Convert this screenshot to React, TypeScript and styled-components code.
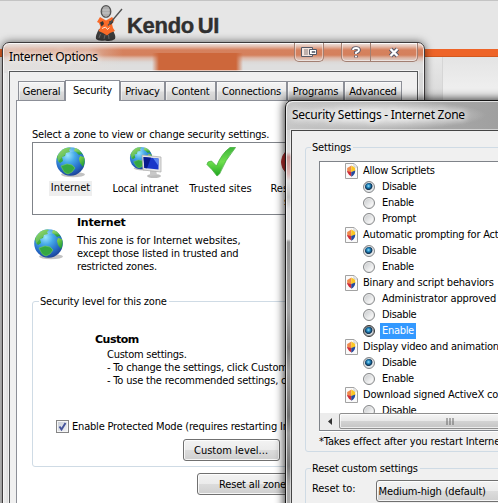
import React from "react";
import styled, { createGlobalStyle, css } from "styled-components";

const Global = createGlobalStyle`
  * { box-sizing: border-box; }
  html, body { margin: 0; padding: 0; overflow: hidden; }
  body { font: 11px/13px "DejaVu Sans Condensed", "DejaVu Sans", Tahoma, sans-serif; font-stretch: condensed; color: #000; }
`;

const Desktop = styled.div`
  position: relative;
  width: 498px;
  height: 503px;
  overflow: hidden;
  background: #e4e4e4;
`;
const SiteHeader = styled.header`
  height: 49px;
  display: flex;
  padding: 4px 0 0 95px;
  border-top: 1px solid #c4c4c4;
  background: #e6e6e6;
`;
const SiteName = styled.div`
  margin: 8px 0 0 4px;
  font: bold 22px/25px "Liberation Sans", Arial, sans-serif;
  letter-spacing: -0.3px;
  word-spacing: -2px;
  color: #303030;
  -webkit-text-stroke: 0.4px #303030;
  white-space: nowrap;
`;
const SiteBar = styled.div`
  height: 8px;
  background: #ee6428;
  border-bottom: 1px solid #d2581f;
`;
const SiteBody = styled.div`
  height: 446px;
  display: flex;
  justify-content: flex-end;
  background: linear-gradient(#e7e7e7, #dadada 42px);
`;
const SiteAside = styled.div`
  width: 56px;
  border-left: 1px solid #d6d6d6;
  background: linear-gradient(#e4e4e4, #eeeeee 30px);
`;

const frame = css`
  position: absolute;
  display: flex;
  flex-direction: column;
  border: 1px solid #3d3a3b;
  border-radius: 7px 7px 0 0;
`;
const OptionsWindow = styled.section`
  ${frame}
  left: 2px;
  top: 42px;
  width: 423px;
  height: 475px;
  padding: 0 6px;
  background:
    linear-gradient(90deg, #d0693e00 0 149px, #cd673b 156px 233px, #d0693e00 240px) 0 10px / 100% 18px no-repeat,
    linear-gradient(90deg, #e5e1df99 0, #e5dfdb77 70px 85px, #e0dcda00 120px) 0 0 / 100% 28px no-repeat,
    linear-gradient(#efe6e3 0, #e6c4b6 3px, #d6815e 7px, #d4805c 12px, #ddb6a6 15px, #dcd8d6 19px, #dedede 22px) 0 0 / 100% 30px no-repeat,
    linear-gradient(90deg, #d8d8d8, #ececec 2px, #d6d6d6 6px, #d9d9d9);
  box-shadow: inset 0 0 0 1px #ffffffc0, 0 0 9px #0009;
`;
const SettingsWindow = styled.section`
  ${frame}
  left: 285px;
  top: 100px;
  width: 240px;
  height: 425px;
  padding: 0 5px;
  border-color: #171717;
  background:
    radial-gradient(ellipse 110px 15px at 90px 14px, #e0e0e0 35%, #cfcfcf88 75%, #bbb0) 0 0 / 100% 29px no-repeat,
    linear-gradient(90deg, #c7c7c7, #a8a8a8 150px, #9c9c9c) 0 0 / 100% 29px no-repeat,
    linear-gradient(#d2d2d2 0 29px, #dadada 51px, #c7908f 56px, #d9b6b4 73px, #ddd 80px, #bbb 96px, #dedede 108px 138px, #939393 141px, #a4a4a4 210px, #777 246px, #9c9c9c 270px, #6f6f6f 315px, #9b9b9b 332px, #777 365px, #aaa 385px);
  box-shadow: inset 1px 1px 0 #ffffffb0, 0 0 10px 1px #000c;
`;
const TitleBar = styled.div`
  display: flex;
  justify-content: space-between;
  height: 28px;
  flex: none;
`;
const Title = styled.h1<{ $ls?: number; $ml?: number }>`
  margin: 0 0 0 ${p => p.$ml ?? 0}px;
  font: 12px/28px "Noto Sans", sans-serif;
  letter-spacing: ${p => p.$ls ?? 0}px;
  text-shadow: 0 0 6px #fff, 0 0 9px #fff;
  white-space: nowrap;
`;
const Caption = styled.div`
  display: flex;
  gap: 17px;
`;
const CaptionGroup = styled.div`
  display: flex;
  height: 19px;
  border: 1px solid #a17f72;
  border-top: 0;
  border-radius: 0 0 5px 5px;
  box-shadow: inset 0 0 0 1px #ffffff70;
`;
const CaptionButton = styled.div<{ $w: number }>`
  width: ${p => p.$w}px;
  display: flex;
  align-items: center;
  justify-content: center;
  & + & { border-left: 1px solid #a17f72; }
`;
const OptionsClient = styled.div`
  flex: 1;
  padding: 8px 0 0 6px;
  border: 1px solid #56585a;
  border-bottom: 0;
  background: #f0f0f0;
  box-shadow: 0 0 0 1px #ffffffa0;
`;
const Tabs = styled.nav`
  display: flex;
  align-items: flex-end;
  height: 20px;
  padding-left: 2px;
`;
const Tab = styled.div<{ $w: number; $on?: boolean }>`
  width: ${p => p.$w}px;
  height: ${p => (p.$on ? 21 : 19)}px;
  margin-bottom: ${p => (p.$on ? -1 : 0)}px;
  padding-top: ${p => (p.$on ? 3 : 3)}px;
  text-align: center;
  white-space: nowrap;
  letter-spacing: -0.2px;
  border: 1px solid #8c8f97;
  border-bottom: 0;
  background: ${p => (p.$on ? "#fff" : "linear-gradient(#f4f4f4, #ebebeb 9px, #dcdcdc 10px, #cfcfcf)")};
  box-shadow: ${p => (p.$on ? "none" : "inset 1px 1px 0 #fff8")};
  z-index: ${p => (p.$on ? 1 : 0)};
`;
const Pane = styled.div`
  width: 393px;
  height: 420px;
  padding: 27px 0 0 15px;
  border: 1px solid #8c8f97;
  background: #fff;
`;
const Line = styled.div<{ $ls?: number; $ml?: number; $mt?: number; $bold?: boolean }>`
  height: 13px;
  margin: ${p => p.$mt ?? 0}px 0 0 ${p => p.$ml ?? 0}px;
  letter-spacing: ${p => p.$ls ?? -0.19}px;
  white-space: nowrap;
  ${p => p.$bold && css`font-family: "DejaVu Sans", sans-serif; font-stretch: normal; font-weight: bold;`}
`;
const ZoneList = styled.div`
  display: flex;
  width: 360px;
  height: 73px;
  margin-top: 1px;
  padding: 3px 0 0 0;
  border: 1px solid #7f8389;
`;
const Zone = styled.div`
  width: 75px;
  flex: none;
  display: flex;
  flex-direction: column;
  align-items: center;
`;
const ZoneLabel = styled.span<{ $on?: boolean; $ls?: number }>`
  margin-top: 3px;
  padding: 0 2px;
  min-height: 15px;
  text-align: center;
  letter-spacing: ${p => p.$ls ?? 0}px;
  background: ${p => (p.$on ? "#eee" : "transparent")};
`;
const ZoneInfo = styled.div`
  display: flex;
  gap: 12px;
  height: 72px;
  padding: 1px 0 0 1px;
`;
const ZoneIcon = styled.div`
  padding-top: 12px;
  height: 50px;
`;
const Group = styled.fieldset<{ $h: number; $w: number; $pad: string }>`
  width: ${p => p.$w}px;
  height: ${p => p.$h}px;
  margin: 0;
  padding: ${p => p.$pad};
  min-width: 0;
  border: 1px solid #cfdbe5;
  border-radius: 3px;
`;
const Legend = styled.legend<{ $ml?: number }>`
  margin-left: ${p => p.$ml ?? 0}px;
  padding: 0 2px 0 1px;
  height: 13px;
  letter-spacing: -0.19px;
  white-space: nowrap;
`;
const CheckRow = styled.div`
  display: flex;
  gap: 3px;
  margin: 33px 0 0 16px;
`;
const CheckBox = styled.span`
  display: flex;
  width: 13px;
  height: 13px;
  flex: none;
  border: 1px solid #858585;
  background: linear-gradient(135deg, #c5cbd5, #f4f5f7);
  box-shadow: inset 0 0 0 1px #f6f6f6;
`;
const Button = styled.button<{ $w: number; $ls?: number; $pl: number; $m: string }>`
  display: block;
  width: ${p => p.$w}px;
  height: 22px;
  margin: ${p => p.$m};
  padding: 0 0 0 ${p => p.$pl}px;
  text-align: left;
  font: inherit;
  white-space: nowrap;
  letter-spacing: ${p => p.$ls ?? 0}px;
  color: #000;
  border: 1px solid #707070;
  border-radius: 3px;
  background: linear-gradient(#f3f3f3, #ebebeb 50%, #dcdcdc 51%, #cfcfcf);
  box-shadow: inset 0 0 0 1px #fffc;
`;

const SettingsClient = styled.div`
  flex: 1;
  margin-top: 1px;
  padding: 10px 0 0 13px;
  border: 1px solid #454545;
  background: #f0f0f0;
  box-shadow: 0 0 0 1px #ffffff80;
`;
const Tree = styled.div`
  width: 250px;
  height: 270px;
  border: 1px solid #7f8389;
  box-shadow: 0 1px 0 #fff;
  background: #fff;
`;
const TreeRows = styled.div`
  height: 251px;
  padding-top: 1px;
  overflow: hidden;
`;
const TreeRow = styled.div<{ $head?: boolean }>`
  display: flex;
  align-items: center;
  height: 16px;
  gap: ${p => (p.$head ? 3 : 5)}px;
  padding-left: ${p => (p.$head ? 25 : 43)}px;
  white-space: nowrap;
  & > svg { flex: none; }
`;
const RowLabel = styled.span<{ $sel?: boolean; $ls?: number }>`
  height: 16px;
  padding: 1px 2px 0 2px;
  letter-spacing: ${p => p.$ls ?? -0.2}px;
  color: ${p => (p.$sel ? "#fff" : "#000")};
  background: ${p => (p.$sel ? "#3399ff" : "transparent")};
`;
const Radio = styled.span<{ $on?: boolean; $focus?: boolean }>`
  width: 12px;
  height: 12px;
  flex: none;
  border-radius: 50%;
  border: 1px solid ${p => (p.$focus ? "#333" : "#858789")};
  box-shadow: inset 0 0 0 1px ${p => (p.$focus ? "#9a9a9a" : "#e9e9e9")};
  background: ${p =>
    p.$on
      ? "radial-gradient(circle at 4.5px 4px, #9be0f8 0, #2b92c8 1.5px, #0b3d66 3.2px, #1b3752 3.6px, #dfe6ea 4.4px)"
      : "linear-gradient(135deg, #c3c6c9, #f6f6f6 75%)"};
`;
const ScrollBar = styled.div`
  display: flex;
  height: 17px;
  padding: 0 0 1px 1px;
  background: #ececec;
`;
const ScrollArrow = styled.div`
  width: 18px;
  display: flex;
  align-items: center;
  justify-content: center;
`;
const ScrollThumb = styled.div`
  width: 222px;
  display: flex;
  align-items: center;
  justify-content: center;
  border: 1px solid #8f8f8f;
  border-radius: 2px;
  background: linear-gradient(#f5f5f5, #e8e8e8 50%, #d3d3d3 51%, #c4c4c4);
  box-shadow: inset 0 0 0 1px #fffa;
`;
const ResetRow = styled.div`
  display: flex;
  gap: 20px;
`;

const Globe = ({ size = 32 }: { size?: number }) => (
  <svg width={size} height={size} viewBox="0 0 32 32">
    <defs>
      <radialGradient id="sea" cx="0.4" cy="0.28" r="0.75">
        <stop offset="0" stopColor="#9be6fc" />
        <stop offset="0.35" stopColor="#45a8e8" />
        <stop offset="0.75" stopColor="#2467c4" />
        <stop offset="1" stopColor="#1b3f92" />
      </radialGradient>
      <linearGradient id="land" x1="0" y1="0" x2="0.6" y2="1">
        <stop offset="0" stopColor="#93dc4a" />
        <stop offset="1" stopColor="#1f9c3a" />
      </linearGradient>
    </defs>
    <ellipse cx="18" cy="28.6" rx="12" ry="2.6" fill="#9a9a9a" opacity="0.6" />
    <circle cx="15.5" cy="15.5" r="14.3" fill="url(#sea)" />
    <path d="M2 11Q5 4 11 2Q15 1 16 2L14 4L15 6L11 7L10 10L7 11L8 15L5 17L3 15Z" fill="url(#land)" />
    <path d="M20 2Q25 3 28 9L26 8L24 9L21 6L19 5Z" fill="url(#land)" />
    <path d="M25 10L29 11Q30.5 16 28 21L25 17L24 13Z" fill="url(#land)" />
    <path d="M6 20L12 18L17 19L20 22L17 26L13 28Q9 27 8 24Z" fill="#35a843" stroke="#79cf55" strokeWidth="0.6" />
    <path d="M3 8Q8 1 16 1Q24 2 27 7Q20 4 13 7Q7 10 3 16Z" fill="#fff" opacity="0.16" />
  </svg>
);
const Intranet = () => (
  <svg width="34" height="33" viewBox="0 0 34 33">
    <svg x="0" y="0" width="25" height="25" viewBox="0 0 32 32"><Globe /></svg>
    <ellipse cx="25" cy="30" rx="7" ry="2" fill="#bdbdbd" />
    <path d="M21 24h6l1 5-7 1z" fill="#c8c8c8" />
    <path d="M13 9L32 11V26L14 24Z" fill="#e5e5e5" stroke="#a8a8a8" strokeWidth="0.7" />
    <path d="M14.5 11L29.5 12.5V23.5L15.3 22Z" fill="#1a37c9" />
    <path d="M14.5 11L22 11.8L18 22.2L15.3 22Z" fill="#081b8d" />
    <path d="M24 12L29.5 12.5V20Z" fill="#5a84f0" />
  </svg>
);
const Check = () => (
  <svg width="32" height="33" viewBox="0 0 32 33">
    <defs>
      <linearGradient id="tick" x1="0" y1="0" x2="0" y2="1">
        <stop offset="0" stopColor="#3fb53b" />
        <stop offset="0.5" stopColor="#6fe04e" />
        <stop offset="1" stopColor="#1fa51f" />
      </linearGradient>
    </defs>
    <path d="M2 18.5L3 16L6.5 15L11.5 20Q17 7 25 1.5L30.5 1.5Q20 14 14.5 28L12 30Q7 23 2 18.5Z" fill="url(#tick)" stroke="#45ad3e" strokeWidth="0.8" />
  </svg>
);
const Restricted = () => (
  <svg width="32" height="33" viewBox="0 0 32 33">
    <circle cx="16" cy="16" r="14.5" fill="#c32f2f" stroke="#a33" />
    <path d="M8 16h16" stroke="#fff" strokeWidth="5" />
  </svg>
);
const PageIcon = () => (
  <svg width="13" height="16" viewBox="0 0 13 16">
    <path d="M0.5 0.5H9L12.5 4V15.5H0.5Z" fill="#fafafa" stroke="#a2a2a2" />
    <path d="M9 0.5V4H12.5Z" fill="#fff" stroke="#b5b5b5" strokeWidth="0.7" />
    <path d="M6.5 2.5L2.2 5V8.5L6 9Z" fill="#f08a4c" />
    <path d="M6.5 2.5L10.2 5V8.5L6 9Z" fill="#fbc623" />
    <path d="M2.2 8L6.5 9V13.5Q3.5 12 2.2 9Z" fill="#cf2b36" />
    <path d="M6.3 9L10.3 7.5Q10 12 6.3 13.8Z" fill="#234a9e" />
  </svg>
);
const Samurai = () => (
  <svg width="28" height="37" viewBox="0 0 28 37">
    <path d="M4 24Q0 31 1 34Q3 36.5 10 35.5Q16 37 20 34Q21.500 31 17 24Z" fill="#3c3c3c" />
    <path d="M4 33l1.500-4M9 34l1-4M14 34l-.5-4" stroke="#777" strokeWidth="0.8" />
    <path d="M5 12L11 15.500L17 12L19.500 15L17 19L18 23L20 26L15 28L12 30.500L8 28L3.500 26L5.500 22L4 18L2 17Z" fill="#f96a28" />
    <path d="M5 17.500L8 16L9 19L6.500 21.500ZM14 16.500L17 15.500L18.500 17L15.500 20Z" fill="#343434" />
    <path d="M7 23.500l3.500-1.500 2 2.500 2-2" stroke="#ffe3d2" strokeWidth="1" fill="none" />
    <path d="M27 4L13 20.500" stroke="#4f4f4f" strokeWidth="1.300" />
    <ellipse cx="11" cy="6.500" rx="4.800" ry="5.800" fill="#9c9c9c" stroke="#555" strokeWidth="1.300" />
    <path d="M9 2v9M11 1.500v11M13 2v9M7 5h8M7 8h8" stroke="#e2e2e2" strokeWidth="0.500" />
  </svg>
);

type Row = { text: string; head?: boolean; on?: boolean; sel?: boolean; ls?: number };
const rows: Row[] = [
  { text: "Allow Scriptlets", head: true, ls: -0.28 },
  { text: "Disable", on: true, ls: -0.35 },
  { text: "Enable", ls: -0.3 },
  { text: "Prompt" },
  { text: "Automatic prompting for ActiveX controls", head: true },
  { text: "Disable", on: true, ls: -0.35 },
  { text: "Enable", ls: -0.3 },
  { text: "Binary and script behaviors", head: true },
  { text: "Administrator approved", ls: -0.15 },
  { text: "Disable", ls: -0.35 },
  { text: "Enable", on: true, sel: true, ls: -0.3 },
  { text: "Display video and animation on a webpage", head: true },
  { text: "Disable", on: true, ls: -0.35 },
  { text: "Enable", ls: -0.3 },
  { text: "Download signed ActiveX controls", head: true },
  { text: "Disable", ls: -0.35 },
];

export default function App() {
  return (
    <>
      <Global />
      <Desktop>
        <SiteHeader>
          <Samurai />
          <SiteName>Kendo UI</SiteName>
        </SiteHeader>
        <SiteBar />
        <SiteBody><SiteAside /></SiteBody>

        <OptionsWindow>
          <TitleBar>
            <Title $ls={-0.32}>Internet Options</Title>
            <Caption>
              <CaptionGroup>
                <CaptionButton $w={28}>
                  <svg width="16" height="10" viewBox="0 0 16 10">
                    <path d="M0.5 0.5H11.5V9.5H0.5Z" fill="#f3e6e0" stroke="#555a68" />
                    <path d="M4 2v6M6 2v6" stroke="#8c7c78" />
                    <path d="M8.5 2.5H15.5V7.5H8.5Z" fill="#fff" stroke="#555a68" />
                    <path d="M11 4.5h3v1h-3z" fill="#fff" stroke="#555a68" strokeWidth="0.8" />
                  </svg>
                </CaptionButton>
              </CaptionGroup>
              <CaptionGroup>
                <CaptionButton $w={28}>
                  <svg width="10" height="13" viewBox="0 0 10 13">
                    <path d="M2 4Q2 2 5 2Q8 2 8 4Q8 5.5 5 6.5V8M5 9.5V11.5" fill="none" stroke="#55586a" strokeWidth="3.6" />
                    <path d="M2 4Q2 2 5 2Q8 2 8 4Q8 5.5 5 6.5V8M5 9.7V11.3" fill="none" stroke="#fff" strokeWidth="1.8" />
                  </svg>
                </CaptionButton>
                <CaptionButton $w={47}>
                  <svg width="12" height="11" viewBox="0 0 12 11">
                    <path d="M2.5 2L9.5 9M9.5 2L2.5 9" stroke="#55586a" strokeWidth="4.4" />
                    <path d="M2.5 2L9.5 9M9.5 2L2.5 9" stroke="#fff" strokeWidth="2.4" />
                  </svg>
                </CaptionButton>
              </CaptionGroup>
            </Caption>
          </TitleBar>
          <OptionsClient>
            <Tabs>
              <Tab $w={47}>General</Tab>
              <Tab $w={55} $on>Security</Tab>
              <Tab $w={45}>Privacy</Tab>
              <Tab $w={51}>Content</Tab>
              <Tab $w={71}>Connections</Tab>
              <Tab $w={57}>Programs</Tab>
              <Tab $w={58}>Advanced</Tab>
            </Tabs>
            <Pane>
              <Line>Select a zone to view or change security settings.</Line>
              <ZoneList>
                <Zone><Globe /><ZoneLabel $on>Internet</ZoneLabel></Zone>
                <Zone><Intranet /><ZoneLabel $ls={-0.15}>Local intranet</ZoneLabel></Zone>
                <Zone><Check /><ZoneLabel>Trusted sites</ZoneLabel></Zone>
                <Zone><Restricted /><ZoneLabel>Restricted sites</ZoneLabel></Zone>
              </ZoneList>
              <ZoneInfo>
                <ZoneIcon><Globe /></ZoneIcon>
                <div>
                  <Line $bold $ls={-0.25}>Internet</Line>
                  <Line $mt={5} $ls={-0.1}>This zone is for Internet websites,</Line>
                  <Line $ls={-0.15}>except those listed in trusted and</Line>
                  <Line $ls={-0.15}>restricted zones.</Line>
                </div>
              </ZoneInfo>
              <Line $mt={-5} />
              <Group $w={360} $h={172} $pad="25px 0 0 7px">
                <Legend $ml={-1}>Security level for this zone</Legend>
                <Line $bold $ml={55} $ls={-0.5}>Custom</Line>
                <Line $ml={67} $mt={2} $ls={-0.25}>Custom settings.</Line>
                <Line $ml={67}>- To change the settings, click Custom level.</Line>
                <Line $ml={67}>- To use the recommended settings, click</Line>
                <CheckRow>
                  <CheckBox>
                    <svg width="11" height="11" viewBox="0 0 11 11"><path d="M2.5 5.5L4.5 8.5L8.5 2" fill="none" stroke="#44539a" strokeWidth="1.9" /></svg>
                  </CheckBox>
                  <Line>Enable Protected Mode (requires restarting Internet Explorer)</Line>
                </CheckRow>
                <Button $w={97} $pl={10} $m="6px 0 0 143px">Custom level...</Button>
              </Group>
              <Button $w={190} $pl={21} $m="6px 0 0 165px" $ls={-0.15}>Reset all zones to default level</Button>
            </Pane>
          </OptionsClient>
        </OptionsWindow>

        <SettingsWindow>
          <TitleBar><Title $ls={-0.26} $ml={1}>Security Settings - Internet Zone</Title></TitleBar>
          <SettingsClient>
            <Group $w={260} $h={311} $pad="7px 0 0 13px">
              <Legend $ml={-8}>Settings</Legend>
              <Tree>
                <TreeRows>
                  {rows.map((r, i) => (
                    <TreeRow key={i} $head={r.head}>
                      {r.head ? <PageIcon /> : <Radio $on={r.on} $focus={r.sel} />}
                      <RowLabel $sel={r.sel} $ls={r.ls}>{r.text}</RowLabel>
                    </TreeRow>
                  ))}
                </TreeRows>
                <ScrollBar>
                  <ScrollArrow>
                    <svg width="4" height="7" viewBox="0 0 4 7"><path d="M4 0V7L0 3.5Z" fill="#333" /></svg>
                  </ScrollArrow>
                  <ScrollThumb>
                    <svg width="8" height="7" viewBox="0 0 8 7"><path d="M1 0v7M4 0v7M7 0v7" stroke="#666" /></svg>
                  </ScrollThumb>
                </ScrollBar>
              </Tree>
              <Line $mt={4} $ls={-0.12}>*Takes effect after you restart Internet Explorer</Line>
            </Group>
            <Line $mt={-3} />
            <Group $w={260} $h={70} $pad="5px 0 0 6px">
              <Legend $ml={-1}>Reset custom settings</Legend>
              <ResetRow>
                <Line $mt={2} $ls={-0.05}>Reset to:</Line>
                <Button $w={180} $pl={2} $m="0" $ls={-0.15}>Medium-high (default)</Button>
              </ResetRow>
            </Group>
          </SettingsClient>
        </SettingsWindow>
      </Desktop>
    </>
  );
}
